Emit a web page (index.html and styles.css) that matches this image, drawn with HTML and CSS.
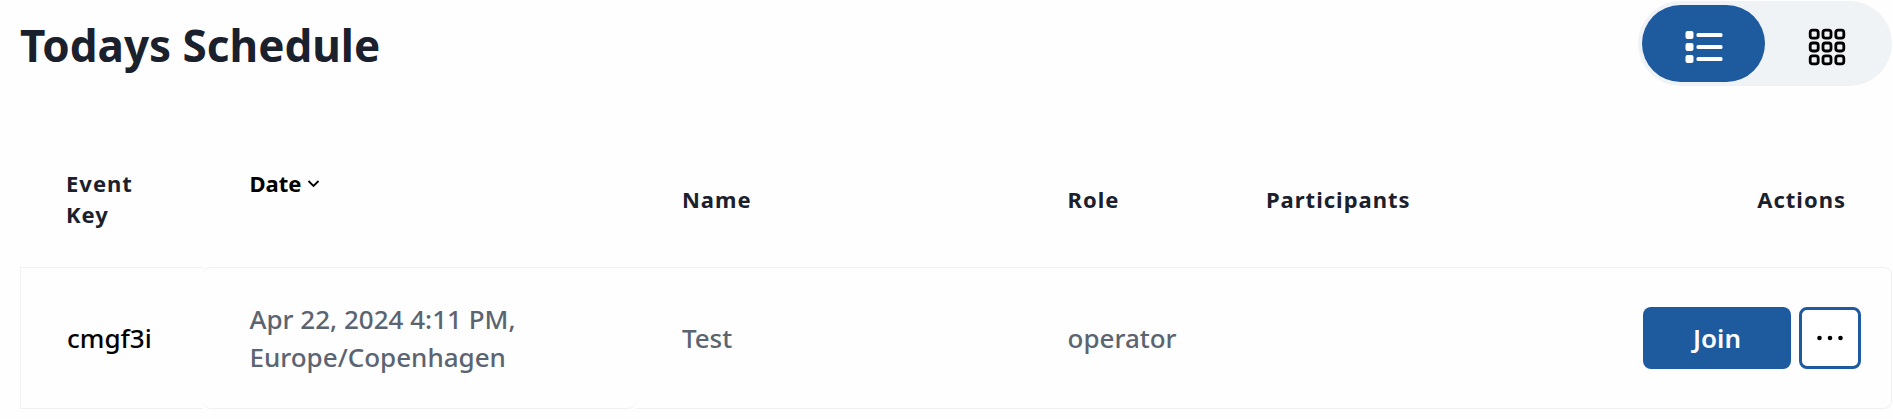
FILE: index.html
```html
<!DOCTYPE html>
<html lang="en">

<head>
    <meta charset="UTF-8" />
    <meta name="viewport" content="width=device-width, initial-scale=1.0" />
    <title>Todays Schedule</title>
    <link rel="stylesheet" href="styles.css">
</head>

<body>

<main class="schedule">
    <header class="schedule__header">
        <h1 class="schedule__title">Todays Schedule</h1>
        <div class="view-toggle" role="group" aria-label="View">
            <button class="view-toggle__btn view-toggle__btn--active" type="button" aria-label="List view" aria-pressed="true">
                <svg width="38" height="32" viewBox="0 0 38 32" fill="currentColor">
                    <rect x="0.5" y="0" width="8" height="8" rx="2"/>
                    <rect x="0.5" y="12" width="8" height="8" rx="2"/>
                    <rect x="0.5" y="24" width="8" height="8" rx="2"/>
                    <rect x="11.5" y="2" width="26" height="4" rx="1.5"/>
                    <rect x="11.5" y="14" width="26" height="4" rx="1.5"/>
                    <rect x="11.5" y="26" width="26" height="4" rx="1.5"/>
                </svg>
            </button>
            <button class="view-toggle__btn" type="button" aria-label="Grid view" aria-pressed="false">
                <svg width="38" height="38" viewBox="0 0 38 38" fill="none" stroke="currentColor" stroke-width="2.8">
                    <rect x="2.2" y="2.2" width="8" height="8" rx="2.4"/>
                    <rect x="15" y="2.2" width="8" height="8" rx="2.4"/>
                    <rect x="27.8" y="2.2" width="8" height="8" rx="2.4"/>
                    <rect x="2.2" y="15" width="8" height="8" rx="2.4"/>
                    <rect x="15" y="15" width="8" height="8" rx="2.4"/>
                    <rect x="27.8" y="15" width="8" height="8" rx="2.4"/>
                    <rect x="2.2" y="27.8" width="8" height="8" rx="2.4"/>
                    <rect x="15" y="27.8" width="8" height="8" rx="2.4"/>
                    <rect x="27.8" y="27.8" width="8" height="8" rx="2.4"/>
                </svg>
            </button>
        </div>
    </header>

    <table class="events">
        <thead>
            <tr>
                <th class="events__key" scope="col">Event Key</th>
                <th class="events__date" scope="col">
                    <button class="sort-btn" type="button">Date
                        <svg width="13" height="9" viewBox="0 0 13 9" fill="none" stroke="currentColor" stroke-width="1.8">
                            <path d="M1.5 2l5 5 5-5"/>
                        </svg>
                    </button>
                </th>
                <th class="events__name" scope="col">Name</th>
                <th class="events__role" scope="col">Role</th>
                <th class="events__participants" scope="col">Participants</th>
                <th class="events__actions" scope="col">Actions</th>
            </tr>
        </thead>
        <tbody>
            <tr>
                <td class="events__key">cmgf3i</td>
                <td class="events__date">Apr 22, 2024 4:11 PM, Europe/Copenhagen</td>
                <td class="events__name">Test</td>
                <td class="events__role">operator</td>
                <td class="events__participants"></td>
                <td class="events__actions">
                    <div class="actions">
                        <button class="btn btn--primary" type="button">Join</button>
                        <button class="btn btn--more" type="button" aria-label="More actions">
                            <svg width="26" height="6" viewBox="0 0 26 6" fill="currentColor">
                                <circle cx="2.5" cy="3" r="2.3"/>
                                <circle cx="13" cy="3" r="2.3"/>
                                <circle cx="23.5" cy="3" r="2.3"/>
                            </svg>
                        </button>
                    </div>
                </td>
            </tr>
        </tbody>
    </table>
</main>

</body>
</html>
```

FILE: styles.css
```css
*,
*::before,
*::after {
    box-sizing: border-box;
}

body {
    margin: 0;
    font-family: 'Noto Sans', 'Open Sans', sans-serif;
    color: #1a202c;
    background: #fefefe;
}

button {
    font-family: inherit;
    border: none;
    cursor: pointer;
}

.schedule {
    padding: 1px 1px 0 20px;
}

.schedule__header {
    display: flex;
    justify-content: space-between;
    align-items: center;
    margin-bottom: 45px;
}

.schedule__title {
    margin: 0;
    padding-top: 2px;
    font-size: 44px;
    font-weight: 700;
    line-height: 56px;
}

.view-toggle {
    display: flex;
    padding: 4px;
    border-radius: 43px;
    background: #eff3f6;
}

.view-toggle__btn {
    display: flex;
    justify-content: center;
    align-items: center;
    width: 123px;
    height: 77px;
    padding: 6px 0 0;
    border-radius: 39px;
    color: #000;
    background: transparent;
}

.view-toggle__btn--active {
    color: #fff;
    background: #1e5a9e;
}

.events {
    width: 100%;
    table-layout: fixed;
    border-collapse: separate;
    border-spacing: 0;
}

.events th {
    padding: 37px 46px;
    font-size: 22px;
    font-weight: 700;
    line-height: 31px;
    letter-spacing: 1px;
    text-align: left;
}

.events td {
    height: 142px;
    padding: 0 46px;
    font-size: 26px;
    font-weight: 500;
    line-height: 38px;
    color: #5b6471;
    border: 1px solid #f1f1f2;
    border-width: 1px 0;
}

.events__key {
    width: 9.8%;
}

.events__date {
    width: 23.1%;
}

.events__name {
    width: 20.6%;
}

.events__role {
    width: 10.6%;
}

.events__participants {
    width: 16%;
}

.events th.events__date {
    vertical-align: top;
}

.events th.events__actions {
    text-align: right;
}

.events td.events__key {
    color: #000;
    border-left-width: 1px;
}

.events td.events__date {
    border-radius: 8px 0 8px 8px;
}

.events td.events__actions {
    padding-right: 30px;
    border-right-width: 1px;
    border-radius: 0 8px 8px 0;
}

.sort-btn {
    display: flex;
    align-items: center;
    gap: 6px;
    padding: 0;
    font-size: 22px;
    font-weight: 700;
    line-height: 31px;
    color: #000;
    background: transparent;
}

.actions {
    display: flex;
    justify-content: flex-end;
    gap: 8px;
}

.btn {
    display: flex;
    justify-content: center;
    align-items: center;
    height: 62px;
    padding: 0;
    border-radius: 8px;
}

.btn--primary {
    width: 148px;
    font-size: 26px;
    font-weight: 600;
    color: #fff;
    background: #1e5a9e;
}

.btn--more {
    width: 62px;
    color: #000;
    background: #fff;
    border: 3px solid #1e5a9e;
}
```
